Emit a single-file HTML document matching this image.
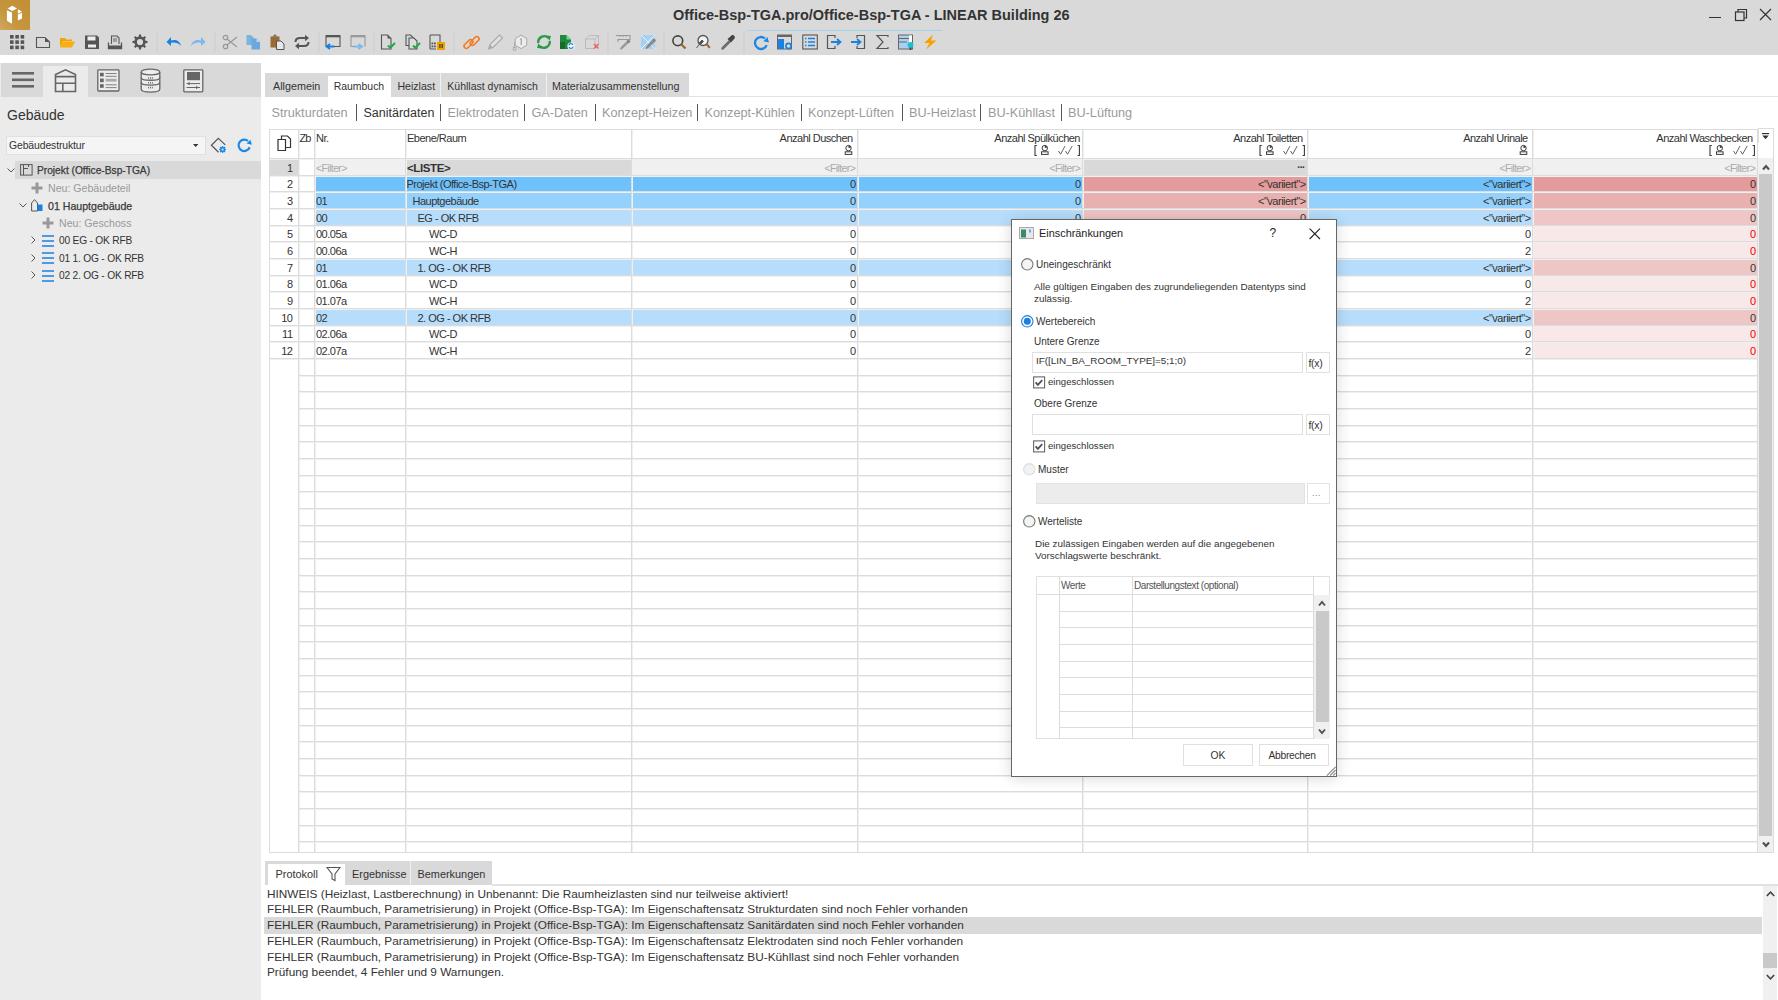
<!DOCTYPE html><html><head><meta charset="utf-8"><title>LINEAR Building</title><style>
*{margin:0;padding:0;box-sizing:border-box}
html,body{width:1778px;height:1000px;overflow:hidden;background:#fff;font-family:"Liberation Sans",sans-serif;color:#333}
div{position:absolute}
.t{white-space:nowrap;line-height:1}
svg{position:absolute;overflow:visible}
</style></head><body>
<div style="left:0px;top:0px;width:1778px;height:55px;background:#d9d9d9"></div>
<div style="left:0px;top:0px;width:29.5px;height:29.5px;background:linear-gradient(45deg,#d0a862 0%,#c5963e 35%,#c18f34 100%)"></div>
<svg style="left:0px;top:0px" width="30" height="30" viewBox="0 0 30 30"><path d="M7.7 8.5 L12.3 5.8 L17 8.6 L12.3 11 Z" fill="#fff"/><path d="M6.9 10.2 L12 12.6 V23.7 L6.9 20.8 Z" fill="#fff"/><path d="M17.9 9.3 L22 11.5 L17.9 13.8 Z" fill="#fff"/><path d="M17.9 14.6 L22 12.8 V18.6 L17.9 20.6 Z" fill="#fff"/></svg>
<div class="t" style="left:673px;top:8px;font-size:14.47px;color:#333;font-weight:bold;">Office-Bsp-TGA.pro/Office-Bsp-TGA - LINEAR Building 26</div>
<div style="left:1709px;top:17px;width:12px;height:1.3px;background:#333"></div>
<svg style="left:1734px;top:8px" width="14" height="14" viewBox="0 0 14 14"><rect x="1.5" y="4" width="8.5" height="8.5" fill="none" stroke="#333" stroke-width="1.2"/><path d="M4 4 V1.5 H12.5 V10 H10" fill="none" stroke="#333" stroke-width="1.2"/></svg>
<svg style="left:1759px;top:8px" width="14" height="14" viewBox="0 0 14 14"><path d="M1 1 L12 12 M12 1 L1 12" stroke="#333" stroke-width="1.2"/></svg>
<svg style="left:9px;top:34px" width="16" height="16" viewBox="0 0 16 16"><rect x="1.0" y="1.0" width="3.6" height="3.6" fill="#555"/><rect x="1.0" y="6.3" width="3.6" height="3.6" fill="#555"/><rect x="1.0" y="11.6" width="3.6" height="3.6" fill="#555"/><rect x="6.3" y="1.0" width="3.6" height="3.6" fill="#555"/><rect x="6.3" y="6.3" width="3.6" height="3.6" fill="#555"/><rect x="6.3" y="11.6" width="3.6" height="3.6" fill="#555"/><rect x="11.6" y="1.0" width="3.6" height="3.6" fill="#555"/><rect x="11.6" y="6.3" width="3.6" height="3.6" fill="#555"/><rect x="11.6" y="11.6" width="3.6" height="3.6" fill="#555"/></svg>
<svg style="left:35px;top:34px" width="16" height="16" viewBox="0 0 16 16"><path d="M1.5 3.5 H10 L14.5 8 V13.5 H1.5 Z" fill="none" stroke="#555" stroke-width="1.1"/><path d="M10 3.5 L14.5 8 H10 Z" fill="#555"/></svg>
<svg style="left:59px;top:34px" width="16" height="16" viewBox="0 0 16 16"><path d="M1 4 H6 L7.5 5.5 H13 V7 H4 L1 13 Z" fill="#f5a300"/><path d="M4 7.5 H16 L13 13.5 H1 Z" fill="#f9ae12"/></svg>
<svg style="left:84px;top:34px" width="16" height="16" viewBox="0 0 16 16"><path d="M1 1.5 H13 L15 3.5 V15 H1 Z" fill="#555"/><rect x="3.5" y="2.5" width="8" height="4" fill="#eee"/><rect x="4" y="10.5" width="8" height="3" fill="#eee"/></svg>
<svg style="left:107px;top:34px" width="16" height="16" viewBox="0 0 16 16"><path d="M1.5 8.5 V14.5 H14.5 V8.5" fill="none" stroke="#555" stroke-width="1.3"/><path d="M4.5 10 V2 H10 L12 4 V10" fill="none" stroke="#555" stroke-width="1.1"/><path d="M6 5 H10 M6 7 H10" stroke="#555" stroke-width="0.9"/><rect x="1.5" y="11.5" width="13" height="3" fill="#555"/></svg>
<svg style="left:132px;top:34px" width="16" height="16" viewBox="0 0 16 16"><circle cx="8" cy="8" r="4.4" fill="none" stroke="#555" stroke-width="2.6"/><rect x="6.9" y="0.5" width="2.2" height="3.2" fill="#555" transform="rotate(0 8 8)"/><rect x="6.9" y="0.5" width="2.2" height="3.2" fill="#555" transform="rotate(45 8 8)"/><rect x="6.9" y="0.5" width="2.2" height="3.2" fill="#555" transform="rotate(90 8 8)"/><rect x="6.9" y="0.5" width="2.2" height="3.2" fill="#555" transform="rotate(135 8 8)"/><rect x="6.9" y="0.5" width="2.2" height="3.2" fill="#555" transform="rotate(180 8 8)"/><rect x="6.9" y="0.5" width="2.2" height="3.2" fill="#555" transform="rotate(225 8 8)"/><rect x="6.9" y="0.5" width="2.2" height="3.2" fill="#555" transform="rotate(270 8 8)"/><rect x="6.9" y="0.5" width="2.2" height="3.2" fill="#555" transform="rotate(315 8 8)"/></svg>
<svg style="left:166px;top:34px" width="16" height="16" viewBox="0 0 16 16"><path d="M15 12 C14 6.5 9 5 5 6.5 L5 3 L0.5 8 L5 12 L5 9 C8 8 12 8.5 15 12 Z" fill="#1c80e0"/></svg>
<svg style="left:190px;top:34px" width="16" height="16" viewBox="0 0 16 16"><path d="M1 12 C2 6.5 7 5 11 6.5 L11 3 L15.5 8 L11 12 L11 9 C8 8 4 8.5 1 12 Z" fill="#7ab8ee"/></svg>
<svg style="left:222px;top:34px" width="16" height="16" viewBox="0 0 16 16"><circle cx="3.5" cy="12.5" r="2.2" fill="none" stroke="#999" stroke-width="1.3"/><circle cx="3.5" cy="3.5" r="2.2" fill="none" stroke="#999" stroke-width="1.3"/><path d="M5 5 L15 13 M5 11 L15 3" stroke="#999" stroke-width="1.3"/></svg>
<svg style="left:246px;top:34px" width="16" height="16" viewBox="0 0 16 16"><path d="M0.5 1 H5 L7.5 3.5 V11 H0.5 Z" fill="#7ab4e0"/><path d="M5.5 4.5 H10.5 L14 8 V15.5 H5.5 Z" fill="#6aa8dc"/><path d="M10.5 4.5 V8 H14" fill="#b8d8f0"/></svg>
<svg style="left:270px;top:34px" width="16" height="16" viewBox="0 0 16 16"><rect x="0.5" y="2.5" width="9" height="11" fill="#9c6a34"/><path d="M2.5 2.5 L5 0.3 L7.5 2.5 Z" fill="#666"/><path d="M6.5 7 H11 L14 10 V15.5 H6.5 Z" fill="#e8e8e8" stroke="#555" stroke-width="1"/></svg>
<svg style="left:294px;top:34px" width="16" height="16" viewBox="0 0 16 16"><path d="M1.5 8 C1.5 5 3.5 4 6 4 H12.5" fill="none" stroke="#555" stroke-width="2"/><path d="M11 0.8 L15 4 L11 7.2 Z" fill="#555"/><path d="M14.5 8 C14.5 11 12.5 12 10 12 H3.5" fill="none" stroke="#555" stroke-width="2"/><path d="M5 8.8 L1 12 L5 15.2 Z" fill="#555"/></svg>
<svg style="left:325px;top:34px" width="16" height="16" viewBox="0 0 16 16"><rect x="0.5" y="1" width="15" height="2.3" fill="#555"/><path d="M1 3 V12 M15 3 V12.5 H9" fill="none" stroke="#555" stroke-width="1.1"/><path d="M9.5 12.5 H3 M5 10 L1.5 12.5 L5 15" fill="none" stroke="#1c80e0" stroke-width="1.9"/></svg>
<svg style="left:350px;top:34px" width="16" height="16" viewBox="0 0 16 16"><rect x="0.5" y="1" width="15" height="2.3" fill="#999"/><path d="M1 3 V12.5 H4 M15 3 V12.5" fill="none" stroke="#999" stroke-width="1.1"/><path d="M3.5 12.5 H10.5 M8.5 10 L12 12.5 L8.5 15" fill="none" stroke="#80b8e8" stroke-width="1.9"/></svg>
<svg style="left:380px;top:34px" width="16" height="16" viewBox="0 0 16 16"><path d="M1.5 1 H7.5 L11 4.5 V15 H1.5 Z" fill="none" stroke="#555" stroke-width="1.1"/><path d="M7.5 1 V4.5 H11 Z" fill="#555"/><path d="M8 11.5 L10.3 13.8 L15 9" fill="none" stroke="#22aa44" stroke-width="2"/></svg>
<svg style="left:405px;top:34px" width="16" height="16" viewBox="0 0 16 16"><path d="M1 1 H5.5 L8 3.5 V11.5 H1 Z" fill="none" stroke="#555" stroke-width="1.1"/><path d="M4 4 H9 L12 7 V15 H4 Z" fill="#ddd" stroke="#555" stroke-width="1.1"/><path d="M8 11.5 L10.3 13.8 L15 9" fill="none" stroke="#22aa44" stroke-width="2"/></svg>
<svg style="left:429px;top:34px" width="16" height="16" viewBox="0 0 16 16"><path d="M1 1 H11 V8 M7 15 H1 Z" fill="none" stroke="#555" stroke-width="1.1"/><path d="M1 1 V15" stroke="#555" stroke-width="1.1"/><rect x="2.5" y="8.5" width="1.8" height="1.8" fill="#555"/><rect x="5" y="8.5" width="1.8" height="1.8" fill="#555"/><rect x="2.5" y="11.5" width="1.8" height="1.8" fill="#555"/><rect x="5" y="11.5" width="1.8" height="1.8" fill="#555"/><rect x="8" y="8" width="8" height="8" fill="#f0a400"/><rect x="10.3" y="10" width="1.2" height="4" fill="#333"/><rect x="12.6" y="10" width="1.2" height="4" fill="#333"/></svg>
<svg style="left:463px;top:34px" width="16" height="16" viewBox="0 0 16 16"><rect x="0.2" y="7.75" width="10.5" height="4.5" rx="2.25" fill="none" stroke="#f57a1e" stroke-width="1.6" transform="rotate(-45 5.45 10)"/><rect x="6.4" y="4.75" width="10.5" height="4.5" rx="2.25" fill="none" stroke="#f57a1e" stroke-width="1.6" transform="rotate(-45 11.65 7)"/></svg>
<svg style="left:487px;top:34px" width="16" height="16" viewBox="0 0 16 16"><path d="M1.5 15 L3 10.5 L12.5 1 L15.5 4 L6 13.5 Z" fill="#e2e2e2" stroke="#aaa" stroke-width="1.1"/><path d="M1.5 15 L3 10.5 L6 13.5 Z" fill="#aaa"/></svg>
<svg style="left:511px;top:34px" width="16" height="16" viewBox="0 0 16 16"><path d="M10 1.2 L15.8 4.5 V11.2 L10 14.6 L4.2 11.2 V4.5 Z" fill="#ececec" stroke="#aaa" stroke-width="1"/><path d="M10.2 4.5 V11" stroke="#999" stroke-width="1.1"/><path d="M9 5.3 L10.2 4.5" stroke="#999" stroke-width="0.9"/><path d="M3.6 8 V13.5" stroke="#aaa" stroke-width="1"/><rect x="2.3" y="13.5" width="2.6" height="2.6" fill="none" stroke="#aaa" stroke-width="0.9"/></svg>
<svg style="left:536px;top:34px" width="16" height="16" viewBox="0 0 16 16"><path d="M2.3 9 A6 6 0 0 1 12.3 3.8" fill="none" stroke="#2a9a4a" stroke-width="2.4"/><path d="M13.7 7 A6 6 0 0 1 3.7 12.2" fill="none" stroke="#2a9a4a" stroke-width="2.4"/><path d="M10 1.5 L15 2 L13.5 6.8 Z M6 14.5 L1 14 L2.5 9.2 Z" fill="#2a9a4a"/></svg>
<svg style="left:559px;top:34px" width="16" height="16" viewBox="0 0 16 16"><path d="M1 1 H7.5 L12 5.5 V15 H1 Z" fill="#1f8a3c"/><path d="M7.5 1 L12 5.5 H7.5 Z" fill="#7fd090"/><rect x="1" y="8" width="5" height="7" fill="#156a2c"/><circle cx="12" cy="12" r="3.6" fill="#fff"/><path d="M9.8 11.5 A2.2 2.2 0 0 1 14 11 M14.2 12.5 A2.2 2.2 0 0 1 10 13" fill="none" stroke="#1c80e0" stroke-width="1.3"/></svg>
<svg style="left:584px;top:34px" width="16" height="16" viewBox="0 0 16 16"><path d="M1.5 5 L5 1.5 H14.5 V11 L11 14.5 H1.5 Z M1.5 5 H11 V14.5 M11 5 L14.5 1.5" fill="none" stroke="#bbb" stroke-width="1"/><path d="M10 10 L14.5 14.5 M14.5 10 L10 14.5" stroke="#f06060" stroke-width="1.5"/></svg>
<svg style="left:615px;top:34px" width="16" height="16" viewBox="0 0 16 16"><path d="M1 1.5 H15 V5.5 H3 V8" fill="none" stroke="#999" stroke-width="1.1"/><path d="M5 1.5 V3 M8 1.5 V3 M11 1.5 V3" stroke="#999" stroke-width="1"/><path d="M13 7 L7 13 L5.5 15 L7.5 14 L13.5 8" fill="none" stroke="#999" stroke-width="1.4"/><circle cx="13.5" cy="7.5" r="1.8" fill="#888"/></svg>
<svg style="left:640px;top:34px" width="16" height="16" viewBox="0 0 16 16"><rect x="1" y="1" width="14" height="14" fill="#a8d0f0"/><path d="M1 1 L15 15 M15 1 L1 15" stroke="#e8f2fa" stroke-width="1"/><path d="M13.5 6 L7.5 12 L6 14.5 L8.5 13 L14.5 7" fill="none" stroke="#888" stroke-width="1.3"/><circle cx="14" cy="6.5" r="1.8" fill="#888"/></svg>
<svg style="left:671px;top:34px" width="16" height="16" viewBox="0 0 16 16"><circle cx="6.8" cy="6.8" r="4.9" fill="none" stroke="#444" stroke-width="1.6"/><path d="M10.3 10.3 L14.5 14.5" stroke="#a0642a" stroke-width="2.2"/></svg>
<svg style="left:695px;top:34px" width="16" height="16" viewBox="0 0 16 16"><circle cx="8" cy="6.5" r="5" fill="#f4f4f4" stroke="#555" stroke-width="1.3"/><path d="M11.5 10 L14.8 13.8" stroke="#a0642a" stroke-width="2"/><path d="M7 6 L4 9 L5.5 10.5 L8.5 7.5 Z M4.5 10 L1.5 14" fill="#555" stroke="#555" stroke-width="1"/></svg>
<svg style="left:720px;top:34px" width="16" height="16" viewBox="0 0 16 16"><path d="M9.5 6.5 L2.5 13.5 C1.5 14.5 2 15.5 3 15 L10 8" fill="none" stroke="#666" stroke-width="1.3"/><path d="M7.5 5 L11.5 1.5 C13 0 16 3 14.5 4.5 L11 8.5 Z" fill="#444"/></svg>
<svg style="left:754px;top:34px" width="16" height="16" viewBox="0 0 16 16"><path d="M12.64 11.05 A6 6 0 1 1 10.86 4.4" fill="none" stroke="#1c88e6" stroke-width="2.3"/><path d="M9.4 7.2 L15 8.6 L13.4 3.1 Z" fill="#1c88e6"/></svg>
<svg style="left:777px;top:34px" width="16" height="16" viewBox="0 0 16 16"><rect x="0.5" y="1" width="14" height="14" fill="none" stroke="#666" stroke-width="1"/><rect x="0.5" y="1" width="14" height="2" fill="#666"/><rect x="1" y="5" width="6" height="10" fill="#1c80e0"/><circle cx="11.5" cy="12" r="2.6" fill="none" stroke="#1c80e0" stroke-width="1.6"/></svg>
<svg style="left:802px;top:34px" width="16" height="16" viewBox="0 0 16 16"><rect x="0.8" y="1" width="14.5" height="14" fill="none" stroke="#555" stroke-width="1.1"/><path d="M3 4.5 H4.5 M6 4.5 H13 M3 8 H4.5 M6 8 H13 M3 11.5 H4.5 M6 11.5 H13" stroke="#1c80e0" stroke-width="1.3"/></svg>
<svg style="left:826px;top:34px" width="16" height="16" viewBox="0 0 16 16"><path d="M9 4 V1.5 H1.5 V14.5 H9 V12" fill="none" stroke="#555" stroke-width="1.2"/><path d="M5 8 H14 M11 5 L14.5 8 L11 11" fill="none" stroke="#1c80e0" stroke-width="1.8"/></svg>
<svg style="left:850px;top:34px" width="16" height="16" viewBox="0 0 16 16"><path d="M7 4 V1.5 H14.5 V14.5 H7 V12" fill="none" stroke="#555" stroke-width="1.2"/><path d="M1 8 H10 M7 5 L10.5 8 L7 11" fill="none" stroke="#1c80e0" stroke-width="1.8"/></svg>
<svg style="left:875px;top:34px" width="16" height="16" viewBox="0 0 16 16"><path d="M13 3 V1.5 H2 L8 8 L2 14.5 H13 V13" fill="none" stroke="#555" stroke-width="1.2"/></svg>
<svg style="left:898px;top:34px" width="16" height="16" viewBox="0 0 16 16"><rect x="0.5" y="1" width="14" height="14" fill="#a8d0f0" stroke="#666" stroke-width="1"/><path d="M0.5 4.5 H14.5 M0.5 8 H9" stroke="#666" stroke-width="1"/><rect x="11" y="1.5" width="3" height="7" fill="#fff"/><circle cx="12.5" cy="11" r="3" fill="#20c0d0"/><rect x="11.6" y="13.5" width="1.8" height="2.5" fill="#444"/></svg>
<svg style="left:922px;top:34px" width="16" height="16" viewBox="0 0 16 16"><path d="M11 0.5 L2 9 H7.5 L4 15.5 L14.5 6.5 H9 Z" fill="#f5a300"/></svg>
<div style="left:156px;top:31px;width:1.5px;height:22px;background:#d3d3d3"></div>
<div style="left:214px;top:31px;width:1.5px;height:22px;background:#d3d3d3"></div>
<div style="left:318px;top:31px;width:1.5px;height:22px;background:#d3d3d3"></div>
<div style="left:373px;top:31px;width:1.5px;height:22px;background:#d3d3d3"></div>
<div style="left:453px;top:31px;width:1.5px;height:22px;background:#d3d3d3"></div>
<div style="left:607px;top:31px;width:1.5px;height:22px;background:#d3d3d3"></div>
<div style="left:663px;top:31px;width:1.5px;height:22px;background:#d3d3d3"></div>
<div style="left:743px;top:31px;width:1.5px;height:22px;background:#d3d3d3"></div>
<div style="left:748px;top:30px;width:194px;height:1px;background:#9fd3ec"></div>
<div style="left:0px;top:63px;width:261px;height:937px;background:#ebebeb"></div>
<div style="left:1px;top:63px;width:260px;height:34px;background:#d9d9d9"></div>
<div style="left:43px;top:66px;width:45px;height:31px;background:#ebebeb"></div>
<svg style="left:12px;top:72px" width="23" height="15" viewBox="0 0 23 15"><rect x="0" y="0" width="22" height="2.6" fill="#666"/><rect x="0" y="6.5" width="22" height="2.6" fill="#666"/><rect x="0" y="13" width="22" height="2.6" fill="#666"/></svg>
<svg style="left:54px;top:69px" width="24" height="24" viewBox="0 0 24 24"><path d="M1.5 22.5 V5.5 L11.5 0.8 L21.5 5.5 V22.5 Z" fill="none" stroke="#666" stroke-width="1.6"/><path d="M1.5 7.6 H21.5 M1.5 14.3 H21.5 M8.8 14.3 V22.5" stroke="#666" stroke-width="1.6"/></svg>
<svg style="left:97px;top:69px" width="23" height="23" viewBox="0 0 23 23"><rect x="0.8" y="0.8" width="21.2" height="21.2" rx="0.8" fill="#ececec" stroke="#666" stroke-width="1.3"/><rect x="3" y="3.8" width="3.7" height="3.6" fill="#666"/><rect x="3" y="9.6" width="3.7" height="3.6" fill="#666"/><rect x="3" y="15.2" width="3.7" height="3.6" fill="#666"/><path d="M8.6 4.5 H19.6 M8.6 7.3 H19.6 M8.6 15.8 H19.6 M8.6 18.6 H19.6" stroke="#666" stroke-width="0.8"/><rect x="8.6" y="9.8" width="11" height="2.8" fill="#aaa"/></svg>
<svg style="left:139px;top:68px" width="24" height="26" viewBox="0 0 24 26"><path d="M2.2 4 V21 C2.2 25.2 20.8 25.2 20.8 21 V4" fill="#ececec" stroke="#666" stroke-width="1.3"/><ellipse cx="11.5" cy="4" rx="9.3" ry="2.9" fill="#ececec" stroke="#666" stroke-width="1.3"/><path d="M2.2 9.4 C2.2 13.2 20.8 13.2 20.8 9.4 M2.2 14.3 C2.2 18.1 20.8 18.1 20.8 14.3" fill="none" stroke="#666" stroke-width="1.3"/><path d="M9.6 9.2 v1.6 M11.5 9.2 v1.6 M13.4 9.2 v1.6 M9.6 14 v1.6 M11.5 14 v1.6 M13.4 14 v1.6 M9.6 18.8 v1.6 M11.5 18.8 v1.6 M13.4 18.8 v1.6" stroke="#666" stroke-width="0.9"/></svg>
<svg style="left:183px;top:69px" width="21" height="24" viewBox="0 0 21 24"><rect x="0.8" y="0.8" width="19" height="22" rx="0.8" fill="#ececec" stroke="#666" stroke-width="1.3"/><rect x="4" y="3" width="13" height="8.2" fill="#666"/><path d="M3.5 14.6 H17 M3.5 18.5 H17" stroke="#666" stroke-width="1"/><rect x="5.4" y="13.2" width="1.3" height="2.8" fill="#666"/><path d="M13 16.8 L15.5 18.5 L13 20.2 Z" fill="#666"/></svg>
<div class="t" style="left:7px;top:107.5px;font-size:14px;color:#333;font-weight:normal;">Gebäude</div>
<div style="left:6px;top:136px;width:199.5px;height:19px;background:#f5f5f5;border:1px solid #e0e0e0"></div>
<div class="t" style="left:9px;top:141px;font-size:10.4px;color:#333;font-weight:normal;letter-spacing:-0.1px">Gebäudestruktur</div>
<svg style="left:193px;top:144px" width="6" height="3" viewBox="0 0 6 3"><path d="M0 0 H5.4 L2.7 2.9 Z" fill="#333"/></svg>
<svg style="left:205px;top:135px" width="50" height="20" viewBox="0 0 50 20"><path d="M13.5 17.3 L6.4 10.3 L13.3 3.3 L20.3 9.9" fill="none" stroke="#555" stroke-width="1.2"/><circle cx="17.6" cy="14.5" r="2.5" fill="#1c88e6"/><rect x="16.900000000000002" y="11.1" width="1.4" height="6.8" fill="#1c88e6" transform="rotate(0 17.6 14.5)"/><rect x="16.900000000000002" y="11.1" width="1.4" height="6.8" fill="#1c88e6" transform="rotate(45 17.6 14.5)"/><rect x="16.900000000000002" y="11.1" width="1.4" height="6.8" fill="#1c88e6" transform="rotate(90 17.6 14.5)"/><rect x="16.900000000000002" y="11.1" width="1.4" height="6.8" fill="#1c88e6" transform="rotate(135 17.6 14.5)"/><circle cx="17.6" cy="14.5" r="1" fill="#ebebeb"/><path d="M44.66 12.25 A5.7 5.7 0 1 1 42.96 5.93" fill="none" stroke="#1c88e6" stroke-width="2.2"/><path d="M41.6 8.4 L46.9 9.7 L45.4 4.8 Z" fill="#1c88e6"/></svg>
<div style="left:15px;top:161px;width:246px;height:18px;background:#d9d9d9"></div>
<svg style="left:7px;top:168px" width="8" height="5" viewBox="0 0 8 5"><path d="M0.5 0.5 L4 4 L7.5 0.5" fill="none" stroke="#555" stroke-width="1"/></svg>
<svg style="left:20px;top:164px" width="13" height="12" viewBox="0 0 13 12"><rect x="0.6" y="0.6" width="11.5" height="10.5" fill="none" stroke="#555" stroke-width="1"/><path d="M3.5 0.6 V11 M3.5 4.5 H8 M8.5 0.6 V3" stroke="#555" stroke-width="1"/></svg>
<div class="t" style="left:37px;top:166px;font-size:10.2px;color:#3a3a3a;font-weight:normal;-webkit-text-stroke:0.25px #3a3a3a">Projekt (Office-Bsp-TGA)</div>
<svg style="left:31px;top:182px" width="12" height="12" viewBox="0 0 12 12"><path d="M6 0.5 V11.5 M0.5 6 H11.5" stroke="#999" stroke-width="3"/></svg>
<div class="t" style="left:48px;top:183px;font-size:10.6px;color:#999;font-weight:normal;">Neu: Gebäudeteil</div>
<svg style="left:19px;top:203px" width="8" height="5" viewBox="0 0 8 5"><path d="M0.5 0.5 L4 4 L7.5 0.5" fill="none" stroke="#555" stroke-width="1"/></svg>
<svg style="left:31px;top:199px" width="12" height="13" viewBox="0 0 12 13"><path d="M0.6 12 V4 L3.5 0.6 L6.5 4 V12 Z" fill="none" stroke="#555" stroke-width="1"/><rect x="6.5" y="5.5" width="5" height="6.5" fill="#1c80e0"/></svg>
<div class="t" style="left:48px;top:201px;font-size:10.6px;color:#3a3a3a;font-weight:normal;-webkit-text-stroke:0.25px #3a3a3a">01 Hauptgebäude</div>
<svg style="left:42px;top:217px" width="12" height="12" viewBox="0 0 12 12"><path d="M6 0.5 V11.5 M0.5 6 H11.5" stroke="#999" stroke-width="3"/></svg>
<div class="t" style="left:59px;top:218px;font-size:10.6px;color:#999;font-weight:normal;">Neu: Geschoss</div>
<svg style="left:31px;top:236.0px" width="5" height="8" viewBox="0 0 5 8"><path d="M0.5 0.5 L4 4 L0.5 7.5" fill="none" stroke="#555" stroke-width="1"/></svg>
<svg style="left:42px;top:234.5px" width="12" height="12" viewBox="0 0 12 12"><path d="M0 1 H12 M0 6 H12 M0 11 H12" stroke="#1c80e0" stroke-width="1.6"/></svg>
<div class="t" style="left:59px;top:236.0px;font-size:10.2px;color:#333;font-weight:normal;letter-spacing:-0.2px">00 EG - OK RFB</div>
<svg style="left:31px;top:253.6px" width="5" height="8" viewBox="0 0 5 8"><path d="M0.5 0.5 L4 4 L0.5 7.5" fill="none" stroke="#555" stroke-width="1"/></svg>
<svg style="left:42px;top:252.1px" width="12" height="12" viewBox="0 0 12 12"><path d="M0 1 H12 M0 6 H12 M0 11 H12" stroke="#1c80e0" stroke-width="1.6"/></svg>
<div class="t" style="left:59px;top:253.6px;font-size:10.2px;color:#333;font-weight:normal;letter-spacing:-0.2px">01 1. OG - OK RFB</div>
<svg style="left:31px;top:271.2px" width="5" height="8" viewBox="0 0 5 8"><path d="M0.5 0.5 L4 4 L0.5 7.5" fill="none" stroke="#555" stroke-width="1"/></svg>
<svg style="left:42px;top:269.7px" width="12" height="12" viewBox="0 0 12 12"><path d="M0 1 H12 M0 6 H12 M0 11 H12" stroke="#1c80e0" stroke-width="1.6"/></svg>
<div class="t" style="left:59px;top:271.2px;font-size:10.2px;color:#333;font-weight:normal;letter-spacing:-0.2px">02 2. OG - OK RFB</div>
<div style="left:265px;top:73px;width:424px;height:23.5px;background:#d9d9d9"></div>
<div style="left:689px;top:96px;width:1089px;height:1px;background:#e3e3e3"></div>
<div style="left:328px;top:76px;width:63px;height:21px;background:#fff"></div>
<div style="left:440px;top:73px;width:1.3px;height:23.5px;background:#f2f2f2"></div>
<div style="left:546px;top:73px;width:1.3px;height:23.5px;background:#f2f2f2"></div>
<div class="t" style="left:273px;top:81.203px;font-size:10.77px;color:#333;font-weight:normal;">Allgemein</div>
<div class="t" style="left:333.7px;top:81.5px;font-size:10.44px;color:#333;font-weight:normal;">Raumbuch</div>
<div class="t" style="left:397.4px;top:81.356px;font-size:10.6px;color:#333;font-weight:normal;">Heizlast</div>
<div class="t" style="left:447.3px;top:81.437px;font-size:10.51px;color:#333;font-weight:normal;">Kühllast dynamisch</div>
<div class="t" style="left:552px;top:81.239px;font-size:10.73px;color:#333;font-weight:normal;">Materialzusammenstellung</div>
<div class="t" style="left:271.5px;top:106.5px;font-size:12.7px;color:#9a9a9a;font-weight:normal;">Strukturdaten</div>
<div class="t" style="left:363.5px;top:106.67999999999999px;font-size:12.5px;color:#333;font-weight:normal;">Sanitärdaten</div>
<div class="t" style="left:447.5px;top:106.5px;font-size:12.7px;color:#9a9a9a;font-weight:normal;">Elektrodaten</div>
<div class="t" style="left:531.5px;top:106.5px;font-size:12.7px;color:#9a9a9a;font-weight:normal;">GA-Daten</div>
<div class="t" style="left:602px;top:106.5px;font-size:12.7px;color:#9a9a9a;font-weight:normal;">Konzept-Heizen</div>
<div class="t" style="left:704.5px;top:106.5px;font-size:12.7px;color:#9a9a9a;font-weight:normal;">Konzept-Kühlen</div>
<div class="t" style="left:808px;top:106.5px;font-size:12.7px;color:#9a9a9a;font-weight:normal;">Konzept-Lüften</div>
<div class="t" style="left:909px;top:106.5px;font-size:12.7px;color:#9a9a9a;font-weight:normal;">BU-Heizlast</div>
<div class="t" style="left:988px;top:106.5px;font-size:12.7px;color:#9a9a9a;font-weight:normal;">BU-Kühllast</div>
<div class="t" style="left:1068px;top:106.5px;font-size:12.7px;color:#9a9a9a;font-weight:normal;">BU-Lüftung</div>
<div style="left:356px;top:104px;width:1.4px;height:17px;background:#555"></div>
<div style="left:440px;top:104px;width:1.4px;height:17px;background:#555"></div>
<div style="left:524px;top:104px;width:1.4px;height:17px;background:#555"></div>
<div style="left:595px;top:104px;width:1.4px;height:17px;background:#555"></div>
<div style="left:697px;top:104px;width:1.4px;height:17px;background:#555"></div>
<div style="left:801px;top:104px;width:1.4px;height:17px;background:#555"></div>
<div style="left:902px;top:104px;width:1.4px;height:17px;background:#555"></div>
<div style="left:980px;top:104px;width:1.4px;height:17px;background:#555"></div>
<div style="left:1061px;top:104px;width:1.4px;height:17px;background:#555"></div>
<div style="left:269px;top:128.5px;width:1504px;height:724.5px;border:1.3px solid #e0e0e0;background:#fff"></div>
<div style="left:269px;top:158.5px;width:29px;height:16.67px;background:#d9d9d9"></div>
<div style="left:314.4px;top:158.5px;width:90.80000000000001px;height:16.67px;background:#f0f0f0"></div>
<div style="left:405.2px;top:158.5px;width:225.90000000000003px;height:16.67px;background:#d9d9d9"></div>
<div style="left:631.1px;top:158.5px;width:451.1px;height:16.67px;background:#f0f0f0"></div>
<div style="left:1082.2px;top:158.5px;width:225.0px;height:16.67px;background:#d9d9d9"></div>
<div style="left:1307.2px;top:158.5px;width:450.0px;height:16.67px;background:#f0f0f0"></div>
<div style="left:314.4px;top:175.17000000000002px;width:767.8000000000001px;height:16.67px;background:#6fc1fc"></div>
<div style="left:1307.2px;top:175.17000000000002px;width:225.0px;height:16.67px;background:#6fc1fc"></div>
<div style="left:1082.2px;top:175.17000000000002px;width:225.0px;height:16.67px;background:#e39b9b"></div>
<div style="left:1532.2px;top:175.17000000000002px;width:225.0px;height:16.67px;background:#e39b9b"></div>
<div style="left:314.4px;top:191.84px;width:767.8000000000001px;height:16.67px;background:#94d1fd"></div>
<div style="left:1307.2px;top:191.84px;width:225.0px;height:16.67px;background:#94d1fd"></div>
<div style="left:1082.2px;top:191.84px;width:225.0px;height:16.67px;background:#e9b0b0"></div>
<div style="left:1532.2px;top:191.84px;width:225.0px;height:16.67px;background:#e9b0b0"></div>
<div style="left:314.4px;top:208.51px;width:767.8000000000001px;height:16.67px;background:#b6defc"></div>
<div style="left:1307.2px;top:208.51px;width:225.0px;height:16.67px;background:#b6defc"></div>
<div style="left:1082.2px;top:208.51px;width:225.0px;height:16.67px;background:#efc6c6"></div>
<div style="left:1532.2px;top:208.51px;width:225.0px;height:16.67px;background:#efc6c6"></div>
<div style="left:1082.2px;top:225.18px;width:225.0px;height:16.67px;background:#f9e8e8"></div>
<div style="left:1532.2px;top:225.18px;width:225.0px;height:16.67px;background:#f9e8e8"></div>
<div style="left:1082.2px;top:241.85000000000002px;width:225.0px;height:16.67px;background:#f9e8e8"></div>
<div style="left:1532.2px;top:241.85000000000002px;width:225.0px;height:16.67px;background:#f9e8e8"></div>
<div style="left:314.4px;top:258.52px;width:767.8000000000001px;height:16.67px;background:#b6defc"></div>
<div style="left:1307.2px;top:258.52px;width:225.0px;height:16.67px;background:#b6defc"></div>
<div style="left:1082.2px;top:258.52px;width:225.0px;height:16.67px;background:#efc6c6"></div>
<div style="left:1532.2px;top:258.52px;width:225.0px;height:16.67px;background:#efc6c6"></div>
<div style="left:1082.2px;top:275.19px;width:225.0px;height:16.67px;background:#f9e8e8"></div>
<div style="left:1532.2px;top:275.19px;width:225.0px;height:16.67px;background:#f9e8e8"></div>
<div style="left:1082.2px;top:291.86px;width:225.0px;height:16.67px;background:#f9e8e8"></div>
<div style="left:1532.2px;top:291.86px;width:225.0px;height:16.67px;background:#f9e8e8"></div>
<div style="left:314.4px;top:308.53000000000003px;width:767.8000000000001px;height:16.67px;background:#b6defc"></div>
<div style="left:1307.2px;top:308.53000000000003px;width:225.0px;height:16.67px;background:#b6defc"></div>
<div style="left:1082.2px;top:308.53000000000003px;width:225.0px;height:16.67px;background:#efc6c6"></div>
<div style="left:1532.2px;top:308.53000000000003px;width:225.0px;height:16.67px;background:#efc6c6"></div>
<div style="left:1082.2px;top:325.20000000000005px;width:225.0px;height:16.67px;background:#f9e8e8"></div>
<div style="left:1532.2px;top:325.20000000000005px;width:225.0px;height:16.67px;background:#f9e8e8"></div>
<div style="left:1082.2px;top:341.87px;width:225.0px;height:16.67px;background:#f9e8e8"></div>
<div style="left:1532.2px;top:341.87px;width:225.0px;height:16.67px;background:#f9e8e8"></div>
<div style="left:269px;top:159px;width:1488.2px;height:1px;background:#f0f0f0"></div>
<div style="left:269px;top:176px;width:1488.2px;height:1px;background:#f0f0f0"></div>
<div style="left:269px;top:192px;width:1488.2px;height:1px;background:#f0f0f0"></div>
<div style="left:269px;top:209px;width:1488.2px;height:1px;background:#f0f0f0"></div>
<div style="left:269px;top:226px;width:1488.2px;height:1px;background:#f0f0f0"></div>
<div style="left:269px;top:242px;width:1488.2px;height:1px;background:#f0f0f0"></div>
<div style="left:269px;top:259px;width:1488.2px;height:1px;background:#f0f0f0"></div>
<div style="left:269px;top:276px;width:1488.2px;height:1px;background:#f0f0f0"></div>
<div style="left:269px;top:292px;width:1488.2px;height:1px;background:#f0f0f0"></div>
<div style="left:269px;top:309px;width:1488.2px;height:1px;background:#f0f0f0"></div>
<div style="left:269px;top:326px;width:1488.2px;height:1px;background:#f0f0f0"></div>
<div style="left:269px;top:342px;width:1488.2px;height:1px;background:#f0f0f0"></div>
<div style="left:269px;top:359px;width:1488.2px;height:1px;background:#f0f0f0"></div>
<div style="left:298px;top:359px;width:1459.2px;height:1px;background:#f0f0f0"></div>
<div style="left:298px;top:376px;width:1459.2px;height:1px;background:#f0f0f0"></div>
<div style="left:298px;top:392px;width:1459.2px;height:1px;background:#f0f0f0"></div>
<div style="left:298px;top:409px;width:1459.2px;height:1px;background:#f0f0f0"></div>
<div style="left:298px;top:426px;width:1459.2px;height:1px;background:#f0f0f0"></div>
<div style="left:298px;top:442px;width:1459.2px;height:1px;background:#f0f0f0"></div>
<div style="left:298px;top:459px;width:1459.2px;height:1px;background:#f0f0f0"></div>
<div style="left:298px;top:476px;width:1459.2px;height:1px;background:#f0f0f0"></div>
<div style="left:298px;top:492px;width:1459.2px;height:1px;background:#f0f0f0"></div>
<div style="left:298px;top:509px;width:1459.2px;height:1px;background:#f0f0f0"></div>
<div style="left:298px;top:526px;width:1459.2px;height:1px;background:#f0f0f0"></div>
<div style="left:298px;top:542px;width:1459.2px;height:1px;background:#f0f0f0"></div>
<div style="left:298px;top:559px;width:1459.2px;height:1px;background:#f0f0f0"></div>
<div style="left:298px;top:576px;width:1459.2px;height:1px;background:#f0f0f0"></div>
<div style="left:298px;top:592px;width:1459.2px;height:1px;background:#f0f0f0"></div>
<div style="left:298px;top:609px;width:1459.2px;height:1px;background:#f0f0f0"></div>
<div style="left:298px;top:626px;width:1459.2px;height:1px;background:#f0f0f0"></div>
<div style="left:298px;top:642px;width:1459.2px;height:1px;background:#f0f0f0"></div>
<div style="left:298px;top:659px;width:1459.2px;height:1px;background:#f0f0f0"></div>
<div style="left:298px;top:676px;width:1459.2px;height:1px;background:#f0f0f0"></div>
<div style="left:298px;top:692px;width:1459.2px;height:1px;background:#f0f0f0"></div>
<div style="left:298px;top:709px;width:1459.2px;height:1px;background:#f0f0f0"></div>
<div style="left:298px;top:726px;width:1459.2px;height:1px;background:#f0f0f0"></div>
<div style="left:298px;top:742px;width:1459.2px;height:1px;background:#f0f0f0"></div>
<div style="left:298px;top:759px;width:1459.2px;height:1px;background:#f0f0f0"></div>
<div style="left:298px;top:776px;width:1459.2px;height:1px;background:#f0f0f0"></div>
<div style="left:298px;top:792px;width:1459.2px;height:1px;background:#f0f0f0"></div>
<div style="left:298px;top:809px;width:1459.2px;height:1px;background:#f0f0f0"></div>
<div style="left:298px;top:826px;width:1459.2px;height:1px;background:#f0f0f0"></div>
<div style="left:298px;top:842px;width:1459.2px;height:1px;background:#f0f0f0"></div>
<div style="left:299px;top:128.5px;width:1px;height:724.5px;background:#f0f0f0"></div>
<div style="left:315px;top:128.5px;width:1px;height:724.5px;background:#f0f0f0"></div>
<div style="left:406px;top:128.5px;width:1px;height:724.5px;background:#f0f0f0"></div>
<div style="left:632px;top:128.5px;width:1px;height:724.5px;background:#f0f0f0"></div>
<div style="left:858px;top:128.5px;width:1px;height:724.5px;background:#f0f0f0"></div>
<div style="left:1083px;top:128.5px;width:1px;height:724.5px;background:#f0f0f0"></div>
<div style="left:1308px;top:128.5px;width:1px;height:724.5px;background:#f0f0f0"></div>
<div style="left:1533px;top:128.5px;width:1px;height:724.5px;background:#f0f0f0"></div>
<div style="left:1758px;top:128.5px;width:1px;height:724.5px;background:#f0f0f0"></div>
<div style="left:269px;top:158px;width:1488.2px;height:1px;background:#dcdcdc"></div>
<div style="left:269px;top:175px;width:1488.2px;height:1px;background:#dcdcdc"></div>
<div style="left:269px;top:191px;width:1488.2px;height:1px;background:#dcdcdc"></div>
<div style="left:269px;top:208px;width:1488.2px;height:1px;background:#dcdcdc"></div>
<div style="left:269px;top:225px;width:1488.2px;height:1px;background:#dcdcdc"></div>
<div style="left:269px;top:241px;width:1488.2px;height:1px;background:#dcdcdc"></div>
<div style="left:269px;top:258px;width:1488.2px;height:1px;background:#dcdcdc"></div>
<div style="left:269px;top:275px;width:1488.2px;height:1px;background:#dcdcdc"></div>
<div style="left:269px;top:291px;width:1488.2px;height:1px;background:#dcdcdc"></div>
<div style="left:269px;top:308px;width:1488.2px;height:1px;background:#dcdcdc"></div>
<div style="left:269px;top:325px;width:1488.2px;height:1px;background:#dcdcdc"></div>
<div style="left:269px;top:341px;width:1488.2px;height:1px;background:#dcdcdc"></div>
<div style="left:269px;top:358px;width:1488.2px;height:1px;background:#dcdcdc"></div>
<div style="left:298px;top:358px;width:1459.2px;height:1px;background:#dcdcdc"></div>
<div style="left:298px;top:375px;width:1459.2px;height:1px;background:#dcdcdc"></div>
<div style="left:298px;top:391px;width:1459.2px;height:1px;background:#dcdcdc"></div>
<div style="left:298px;top:408px;width:1459.2px;height:1px;background:#dcdcdc"></div>
<div style="left:298px;top:425px;width:1459.2px;height:1px;background:#dcdcdc"></div>
<div style="left:298px;top:441px;width:1459.2px;height:1px;background:#dcdcdc"></div>
<div style="left:298px;top:458px;width:1459.2px;height:1px;background:#dcdcdc"></div>
<div style="left:298px;top:475px;width:1459.2px;height:1px;background:#dcdcdc"></div>
<div style="left:298px;top:491px;width:1459.2px;height:1px;background:#dcdcdc"></div>
<div style="left:298px;top:508px;width:1459.2px;height:1px;background:#dcdcdc"></div>
<div style="left:298px;top:525px;width:1459.2px;height:1px;background:#dcdcdc"></div>
<div style="left:298px;top:541px;width:1459.2px;height:1px;background:#dcdcdc"></div>
<div style="left:298px;top:558px;width:1459.2px;height:1px;background:#dcdcdc"></div>
<div style="left:298px;top:575px;width:1459.2px;height:1px;background:#dcdcdc"></div>
<div style="left:298px;top:591px;width:1459.2px;height:1px;background:#dcdcdc"></div>
<div style="left:298px;top:608px;width:1459.2px;height:1px;background:#dcdcdc"></div>
<div style="left:298px;top:625px;width:1459.2px;height:1px;background:#dcdcdc"></div>
<div style="left:298px;top:641px;width:1459.2px;height:1px;background:#dcdcdc"></div>
<div style="left:298px;top:658px;width:1459.2px;height:1px;background:#dcdcdc"></div>
<div style="left:298px;top:675px;width:1459.2px;height:1px;background:#dcdcdc"></div>
<div style="left:298px;top:691px;width:1459.2px;height:1px;background:#dcdcdc"></div>
<div style="left:298px;top:708px;width:1459.2px;height:1px;background:#dcdcdc"></div>
<div style="left:298px;top:725px;width:1459.2px;height:1px;background:#dcdcdc"></div>
<div style="left:298px;top:741px;width:1459.2px;height:1px;background:#dcdcdc"></div>
<div style="left:298px;top:758px;width:1459.2px;height:1px;background:#dcdcdc"></div>
<div style="left:298px;top:775px;width:1459.2px;height:1px;background:#dcdcdc"></div>
<div style="left:298px;top:791px;width:1459.2px;height:1px;background:#dcdcdc"></div>
<div style="left:298px;top:808px;width:1459.2px;height:1px;background:#dcdcdc"></div>
<div style="left:298px;top:825px;width:1459.2px;height:1px;background:#dcdcdc"></div>
<div style="left:298px;top:841px;width:1459.2px;height:1px;background:#dcdcdc"></div>
<div style="left:298px;top:128.5px;width:1px;height:724.5px;background:#dcdcdc"></div>
<div style="left:314px;top:128.5px;width:1px;height:724.5px;background:#dcdcdc"></div>
<div style="left:405px;top:128.5px;width:1px;height:724.5px;background:#dcdcdc"></div>
<div style="left:631px;top:128.5px;width:1px;height:724.5px;background:#dcdcdc"></div>
<div style="left:857px;top:128.5px;width:1px;height:724.5px;background:#dcdcdc"></div>
<div style="left:1082px;top:128.5px;width:1px;height:724.5px;background:#dcdcdc"></div>
<div style="left:1307px;top:128.5px;width:1px;height:724.5px;background:#dcdcdc"></div>
<div style="left:1532px;top:128.5px;width:1px;height:724.5px;background:#dcdcdc"></div>
<div style="left:1757px;top:128.5px;width:1px;height:724.5px;background:#dcdcdc"></div>
<div style="left:269px;top:128.5px;width:1504px;height:724.5px;border:1px solid #dcdcdc"></div>
<svg style="left:277px;top:135px" width="15" height="17" viewBox="0 0 15 17"><path d="M4.5 4 V1 H10.5 L13.5 4 V12.5 H8.5" fill="none" stroke="#333" stroke-width="1.2"/><path d="M1 4.5 H8.5 V15.5 H1 Z" fill="none" stroke="#333" stroke-width="1.2"/></svg>
<div class="t" style="left:299.5px;top:133px;font-size:11px;color:#333;font-weight:normal;letter-spacing:-1px">Zb</div>
<div class="t" style="left:316px;top:133px;font-size:11px;color:#333;font-weight:normal;font-size:11px;letter-spacing:-0.5px;">Nr.</div>
<div class="t" style="left:407px;top:133px;font-size:11px;color:#333;font-weight:normal;font-size:11px;letter-spacing:-0.5px;">Ebene/Raum</div>
<div class="t" style="right:925.3px;top:133px;font-size:11px;color:#333;font-weight:normal;font-size:11px;letter-spacing:-0.5px;">Anzahl Duschen</div>
<svg style="left:843.7px;top:145px" width="10" height="10" viewBox="0 0 10 10"><circle cx="4.5" cy="3.1" r="2.7" fill="none" stroke="#3a3a3a" stroke-width="1"/><path d="M4.5 0.4 A2.7 2.7 0 0 1 6.9 2.2 L4.5 3.2 Z" fill="#3a3a3a"/><rect x="1.2" y="6.8" width="6.6" height="2.6" fill="none" stroke="#3a3a3a" stroke-width="1"/></svg>
<div class="t" style="right:698.0px;top:133px;font-size:11px;color:#333;font-weight:normal;font-size:11px;letter-spacing:-0.5px;">Anzahl Spülküchen</div>
<svg style="left:1034.0px;top:145px" width="47" height="11" viewBox="0 0 47 11"><path d="M2.8 0.5 H1 V10.5 H2.8 M43.6 0.5 H45.4 V10.5 H43.6" fill="none" stroke="#3a3a3a" stroke-width="1.1"/><circle cx="10.8" cy="3.1" r="2.7" fill="none" stroke="#3a3a3a" stroke-width="1"/><path d="M10.8 0.4 A2.7 2.7 0 0 1 13.2 2.2 L10.8 3.2 Z" fill="#3a3a3a"/><rect x="7.5" y="6.8" width="6.6" height="2.6" fill="none" stroke="#3a3a3a" stroke-width="1"/><path d="M24.5 6 L26.6 9.2 L31 1 M31.5 6 L33.6 9.2 L38.2 1" fill="none" stroke="#555" stroke-width="0.9"/></svg>
<div class="t" style="right:475.29999999999995px;top:133px;font-size:11px;color:#333;font-weight:normal;font-size:11px;letter-spacing:-0.5px;">Anzahl Toiletten</div>
<svg style="left:1259.0px;top:145px" width="47" height="11" viewBox="0 0 47 11"><path d="M2.8 0.5 H1 V10.5 H2.8 M43.6 0.5 H45.4 V10.5 H43.6" fill="none" stroke="#3a3a3a" stroke-width="1.1"/><circle cx="10.8" cy="3.1" r="2.7" fill="none" stroke="#3a3a3a" stroke-width="1"/><path d="M10.8 0.4 A2.7 2.7 0 0 1 13.2 2.2 L10.8 3.2 Z" fill="#3a3a3a"/><rect x="7.5" y="6.8" width="6.6" height="2.6" fill="none" stroke="#3a3a3a" stroke-width="1"/><path d="M24.5 6 L26.6 9.2 L31 1 M31.5 6 L33.6 9.2 L38.2 1" fill="none" stroke="#555" stroke-width="0.9"/></svg>
<div class="t" style="right:250.29999999999995px;top:133px;font-size:11px;color:#333;font-weight:normal;font-size:11px;letter-spacing:-0.5px;">Anzahl Urinale</div>
<svg style="left:1518.7px;top:145px" width="10" height="10" viewBox="0 0 10 10"><circle cx="4.5" cy="3.1" r="2.7" fill="none" stroke="#3a3a3a" stroke-width="1"/><path d="M4.5 0.4 A2.7 2.7 0 0 1 6.9 2.2 L4.5 3.2 Z" fill="#3a3a3a"/><rect x="1.2" y="6.8" width="6.6" height="2.6" fill="none" stroke="#3a3a3a" stroke-width="1"/></svg>
<div class="t" style="right:25.299999999999955px;top:133px;font-size:11px;color:#333;font-weight:normal;font-size:11px;letter-spacing:-0.5px;">Anzahl Waschbecken</div>
<svg style="left:1709.0px;top:145px" width="47" height="11" viewBox="0 0 47 11"><path d="M2.8 0.5 H1 V10.5 H2.8 M43.6 0.5 H45.4 V10.5 H43.6" fill="none" stroke="#3a3a3a" stroke-width="1.1"/><circle cx="10.8" cy="3.1" r="2.7" fill="none" stroke="#3a3a3a" stroke-width="1"/><path d="M10.8 0.4 A2.7 2.7 0 0 1 13.2 2.2 L10.8 3.2 Z" fill="#3a3a3a"/><rect x="7.5" y="6.8" width="6.6" height="2.6" fill="none" stroke="#3a3a3a" stroke-width="1"/><path d="M24.5 6 L26.6 9.2 L31 1 M31.5 6 L33.6 9.2 L38.2 1" fill="none" stroke="#555" stroke-width="0.9"/></svg>
<div class="t" style="right:1485.5px;top:162.5px;font-size:11px;color:#333;font-weight:normal;font-size:11px;letter-spacing:-0.5px;">1</div>
<div class="t" style="right:1485.5px;top:179.17000000000002px;font-size:11px;color:#333;font-weight:normal;font-size:11px;letter-spacing:-0.5px;">2</div>
<div class="t" style="right:1485.5px;top:195.84px;font-size:11px;color:#333;font-weight:normal;font-size:11px;letter-spacing:-0.5px;">3</div>
<div class="t" style="right:1485.5px;top:212.51px;font-size:11px;color:#333;font-weight:normal;font-size:11px;letter-spacing:-0.5px;">4</div>
<div class="t" style="right:1485.5px;top:229.18px;font-size:11px;color:#333;font-weight:normal;font-size:11px;letter-spacing:-0.5px;">5</div>
<div class="t" style="right:1485.5px;top:245.85000000000002px;font-size:11px;color:#333;font-weight:normal;font-size:11px;letter-spacing:-0.5px;">6</div>
<div class="t" style="right:1485.5px;top:262.52px;font-size:11px;color:#333;font-weight:normal;font-size:11px;letter-spacing:-0.5px;">7</div>
<div class="t" style="right:1485.5px;top:279.19px;font-size:11px;color:#333;font-weight:normal;font-size:11px;letter-spacing:-0.5px;">8</div>
<div class="t" style="right:1485.5px;top:295.86px;font-size:11px;color:#333;font-weight:normal;font-size:11px;letter-spacing:-0.5px;">9</div>
<div class="t" style="right:1485.5px;top:312.53000000000003px;font-size:11px;color:#333;font-weight:normal;font-size:11px;letter-spacing:-0.5px;">10</div>
<div class="t" style="right:1485.5px;top:329.20000000000005px;font-size:11px;color:#333;font-weight:normal;font-size:11px;letter-spacing:-0.5px;">11</div>
<div class="t" style="right:1485.5px;top:345.87px;font-size:11px;color:#333;font-weight:normal;font-size:11px;letter-spacing:-0.5px;">12</div>
<div class="t" style="left:316px;top:163.0px;font-size:10.5px;color:#aaa;font-weight:normal;letter-spacing:-0.6px">&lt;Filter&gt;</div>
<div class="t" style="left:407px;top:162.5px;font-size:11.5px;color:#333;font-weight:bold;letter-spacing:-0.4px">&lt;LISTE&gt;</div>
<div class="t" style="right:922.8px;top:163.0px;font-size:10.5px;color:#aaa;font-weight:normal;letter-spacing:-0.6px">&lt;Filter&gt;</div>
<div class="t" style="right:697.8px;top:163.0px;font-size:10.5px;color:#aaa;font-weight:normal;letter-spacing:-0.6px">&lt;Filter&gt;</div>
<div class="t" style="right:247.79999999999995px;top:163.0px;font-size:10.5px;color:#aaa;font-weight:normal;letter-spacing:-0.6px">&lt;Filter&gt;</div>
<div class="t" style="right:22.799999999999955px;top:163.0px;font-size:10.5px;color:#aaa;font-weight:normal;letter-spacing:-0.6px">&lt;Filter&gt;</div>
<div class="t" style="right:473.79999999999995px;top:160.0px;font-size:10px;color:#333;font-weight:bold;letter-spacing:-0.5px">...</div>
<div class="t" style="left:316px;top:179.17000000000002px;font-size:11px;color:#333;font-weight:normal;font-size:11px;letter-spacing:-0.5px;"></div>
<div class="t" style="left:406.5px;top:179.17000000000002px;font-size:11px;color:#333;font-weight:normal;font-size:11px;letter-spacing:-0.5px;">Projekt (Office-Bsp-TGA)</div>
<div class="t" style="right:922.3px;top:179.17000000000002px;font-size:11px;color:#333;font-weight:normal;font-size:11px;letter-spacing:-0.5px;">0</div>
<div class="t" style="right:697.3px;top:179.17000000000002px;font-size:11px;color:#333;font-weight:normal;font-size:11px;letter-spacing:-0.5px;">0</div>
<div class="t" style="right:472.29999999999995px;top:179.17000000000002px;font-size:11px;color:#333;font-weight:normal;font-size:11px;letter-spacing:-0.5px;">&lt;"variiert"&gt;</div>
<div class="t" style="right:247.29999999999995px;top:179.17000000000002px;font-size:11px;color:#333;font-weight:normal;font-size:11px;letter-spacing:-0.5px;">&lt;"variiert"&gt;</div>
<div class="t" style="right:22.299999999999955px;top:179.17000000000002px;font-size:11px;color:#333;font-weight:normal;font-size:11px;letter-spacing:-0.5px;">0</div>
<div class="t" style="left:316px;top:195.84px;font-size:11px;color:#333;font-weight:normal;font-size:11px;letter-spacing:-0.5px;">01</div>
<div class="t" style="left:412.5px;top:195.84px;font-size:11px;color:#333;font-weight:normal;font-size:11px;letter-spacing:-0.5px;">Hauptgebäude</div>
<div class="t" style="right:922.3px;top:195.84px;font-size:11px;color:#333;font-weight:normal;font-size:11px;letter-spacing:-0.5px;">0</div>
<div class="t" style="right:697.3px;top:195.84px;font-size:11px;color:#333;font-weight:normal;font-size:11px;letter-spacing:-0.5px;">0</div>
<div class="t" style="right:472.29999999999995px;top:195.84px;font-size:11px;color:#333;font-weight:normal;font-size:11px;letter-spacing:-0.5px;">&lt;"variiert"&gt;</div>
<div class="t" style="right:247.29999999999995px;top:195.84px;font-size:11px;color:#333;font-weight:normal;font-size:11px;letter-spacing:-0.5px;">&lt;"variiert"&gt;</div>
<div class="t" style="right:22.299999999999955px;top:195.84px;font-size:11px;color:#333;font-weight:normal;font-size:11px;letter-spacing:-0.5px;">0</div>
<div class="t" style="left:316px;top:212.51px;font-size:11px;color:#333;font-weight:normal;font-size:11px;letter-spacing:-0.5px;">00</div>
<div class="t" style="left:417.5px;top:212.51px;font-size:11px;color:#333;font-weight:normal;font-size:11px;letter-spacing:-0.5px;">EG - OK RFB</div>
<div class="t" style="right:922.3px;top:212.51px;font-size:11px;color:#333;font-weight:normal;font-size:11px;letter-spacing:-0.5px;">0</div>
<div class="t" style="right:697.3px;top:212.51px;font-size:11px;color:#333;font-weight:normal;font-size:11px;letter-spacing:-0.5px;">0</div>
<div class="t" style="right:472.29999999999995px;top:212.51px;font-size:11px;color:#333;font-weight:normal;font-size:11px;letter-spacing:-0.5px;">0</div>
<div class="t" style="right:247.29999999999995px;top:212.51px;font-size:11px;color:#333;font-weight:normal;font-size:11px;letter-spacing:-0.5px;">&lt;"variiert"&gt;</div>
<div class="t" style="right:22.299999999999955px;top:212.51px;font-size:11px;color:#333;font-weight:normal;font-size:11px;letter-spacing:-0.5px;">0</div>
<div class="t" style="left:316px;top:229.18px;font-size:11px;color:#333;font-weight:normal;font-size:11px;letter-spacing:-0.5px;">00.05a</div>
<div class="t" style="left:429px;top:229.18px;font-size:11px;color:#333;font-weight:normal;font-size:11px;letter-spacing:-0.5px;">WC-D</div>
<div class="t" style="right:922.3px;top:229.18px;font-size:11px;color:#333;font-weight:normal;font-size:11px;letter-spacing:-0.5px;">0</div>
<div class="t" style="right:247.29999999999995px;top:229.18px;font-size:11px;color:#333;font-weight:normal;font-size:11px;letter-spacing:-0.5px;">0</div>
<div class="t" style="right:22.299999999999955px;top:229.18px;font-size:11px;color:#f00000;font-weight:normal;font-size:11px;letter-spacing:-0.5px;">0</div>
<div class="t" style="left:316px;top:245.85000000000002px;font-size:11px;color:#333;font-weight:normal;font-size:11px;letter-spacing:-0.5px;">00.06a</div>
<div class="t" style="left:429px;top:245.85000000000002px;font-size:11px;color:#333;font-weight:normal;font-size:11px;letter-spacing:-0.5px;">WC-H</div>
<div class="t" style="right:922.3px;top:245.85000000000002px;font-size:11px;color:#333;font-weight:normal;font-size:11px;letter-spacing:-0.5px;">0</div>
<div class="t" style="right:247.29999999999995px;top:245.85000000000002px;font-size:11px;color:#333;font-weight:normal;font-size:11px;letter-spacing:-0.5px;">2</div>
<div class="t" style="right:22.299999999999955px;top:245.85000000000002px;font-size:11px;color:#f00000;font-weight:normal;font-size:11px;letter-spacing:-0.5px;">0</div>
<div class="t" style="left:316px;top:262.52px;font-size:11px;color:#333;font-weight:normal;font-size:11px;letter-spacing:-0.5px;">01</div>
<div class="t" style="left:417.5px;top:262.52px;font-size:11px;color:#333;font-weight:normal;font-size:11px;letter-spacing:-0.5px;">1. OG - OK RFB</div>
<div class="t" style="right:922.3px;top:262.52px;font-size:11px;color:#333;font-weight:normal;font-size:11px;letter-spacing:-0.5px;">0</div>
<div class="t" style="right:247.29999999999995px;top:262.52px;font-size:11px;color:#333;font-weight:normal;font-size:11px;letter-spacing:-0.5px;">&lt;"variiert"&gt;</div>
<div class="t" style="right:22.299999999999955px;top:262.52px;font-size:11px;color:#333;font-weight:normal;font-size:11px;letter-spacing:-0.5px;">0</div>
<div class="t" style="left:316px;top:279.19px;font-size:11px;color:#333;font-weight:normal;font-size:11px;letter-spacing:-0.5px;">01.06a</div>
<div class="t" style="left:429px;top:279.19px;font-size:11px;color:#333;font-weight:normal;font-size:11px;letter-spacing:-0.5px;">WC-D</div>
<div class="t" style="right:922.3px;top:279.19px;font-size:11px;color:#333;font-weight:normal;font-size:11px;letter-spacing:-0.5px;">0</div>
<div class="t" style="right:247.29999999999995px;top:279.19px;font-size:11px;color:#333;font-weight:normal;font-size:11px;letter-spacing:-0.5px;">0</div>
<div class="t" style="right:22.299999999999955px;top:279.19px;font-size:11px;color:#f00000;font-weight:normal;font-size:11px;letter-spacing:-0.5px;">0</div>
<div class="t" style="left:316px;top:295.86px;font-size:11px;color:#333;font-weight:normal;font-size:11px;letter-spacing:-0.5px;">01.07a</div>
<div class="t" style="left:429px;top:295.86px;font-size:11px;color:#333;font-weight:normal;font-size:11px;letter-spacing:-0.5px;">WC-H</div>
<div class="t" style="right:922.3px;top:295.86px;font-size:11px;color:#333;font-weight:normal;font-size:11px;letter-spacing:-0.5px;">0</div>
<div class="t" style="right:247.29999999999995px;top:295.86px;font-size:11px;color:#333;font-weight:normal;font-size:11px;letter-spacing:-0.5px;">2</div>
<div class="t" style="right:22.299999999999955px;top:295.86px;font-size:11px;color:#f00000;font-weight:normal;font-size:11px;letter-spacing:-0.5px;">0</div>
<div class="t" style="left:316px;top:312.53000000000003px;font-size:11px;color:#333;font-weight:normal;font-size:11px;letter-spacing:-0.5px;">02</div>
<div class="t" style="left:417.5px;top:312.53000000000003px;font-size:11px;color:#333;font-weight:normal;font-size:11px;letter-spacing:-0.5px;">2. OG - OK RFB</div>
<div class="t" style="right:922.3px;top:312.53000000000003px;font-size:11px;color:#333;font-weight:normal;font-size:11px;letter-spacing:-0.5px;">0</div>
<div class="t" style="right:247.29999999999995px;top:312.53000000000003px;font-size:11px;color:#333;font-weight:normal;font-size:11px;letter-spacing:-0.5px;">&lt;"variiert"&gt;</div>
<div class="t" style="right:22.299999999999955px;top:312.53000000000003px;font-size:11px;color:#333;font-weight:normal;font-size:11px;letter-spacing:-0.5px;">0</div>
<div class="t" style="left:316px;top:329.20000000000005px;font-size:11px;color:#333;font-weight:normal;font-size:11px;letter-spacing:-0.5px;">02.06a</div>
<div class="t" style="left:429px;top:329.20000000000005px;font-size:11px;color:#333;font-weight:normal;font-size:11px;letter-spacing:-0.5px;">WC-D</div>
<div class="t" style="right:922.3px;top:329.20000000000005px;font-size:11px;color:#333;font-weight:normal;font-size:11px;letter-spacing:-0.5px;">0</div>
<div class="t" style="right:247.29999999999995px;top:329.20000000000005px;font-size:11px;color:#333;font-weight:normal;font-size:11px;letter-spacing:-0.5px;">0</div>
<div class="t" style="right:22.299999999999955px;top:329.20000000000005px;font-size:11px;color:#f00000;font-weight:normal;font-size:11px;letter-spacing:-0.5px;">0</div>
<div class="t" style="left:316px;top:345.87px;font-size:11px;color:#333;font-weight:normal;font-size:11px;letter-spacing:-0.5px;">02.07a</div>
<div class="t" style="left:429px;top:345.87px;font-size:11px;color:#333;font-weight:normal;font-size:11px;letter-spacing:-0.5px;">WC-H</div>
<div class="t" style="right:922.3px;top:345.87px;font-size:11px;color:#333;font-weight:normal;font-size:11px;letter-spacing:-0.5px;">0</div>
<div class="t" style="right:247.29999999999995px;top:345.87px;font-size:11px;color:#333;font-weight:normal;font-size:11px;letter-spacing:-0.5px;">2</div>
<div class="t" style="right:22.299999999999955px;top:345.87px;font-size:11px;color:#f00000;font-weight:normal;font-size:11px;letter-spacing:-0.5px;">0</div>
<div style="left:1758px;top:128px;width:16px;height:16px;background:#fff;border:1px solid #dcdcdc"></div>
<div style="left:1758px;top:143px;width:16px;height:16px;background:#fff;border-right:1px solid #dcdcdc"></div>
<svg style="left:1762px;top:133px" width="7" height="7" viewBox="0 0 7 7"><rect x="0" y="0" width="7" height="1.2" fill="#333"/><path d="M0.3 2.6 H6.7 L3.5 6.2 Z" fill="#333"/></svg>
<div style="left:1758px;top:158px;width:16px;height:695px;background:#f0f0f0;border-right:1px solid #dcdcdc;border-bottom:1px solid #dcdcdc"></div>
<div style="left:1759.2px;top:174px;width:12.5px;height:662px;background:#c9c9c9"></div>
<svg style="left:1761.5px;top:164px" width="8" height="7" viewBox="0 0 8 7"><path d="M1 5.5 L4 2 L7 5.5" fill="none" stroke="#505050" stroke-width="2.1"/></svg>
<svg style="left:1761.5px;top:841px" width="8" height="7" viewBox="0 0 8 7"><path d="M1 1.5 L4 5 L7 1.5" fill="none" stroke="#505050" stroke-width="2.1"/></svg>
<div style="left:265px;top:861.3px;width:227px;height:23.5px;background:#d9d9d9"></div>
<div style="left:267.5px;top:864px;width:77.5px;height:21px;background:#fff"></div>
<div style="left:410px;top:861.3px;width:1.3px;height:23.5px;background:#f2f2f2"></div>
<div style="left:492px;top:884.3px;width:1286px;height:1.3px;background:#e2e2e2"></div>
<div class="t" style="left:275.5px;top:869px;font-size:10.9px;color:#333;font-weight:normal;">Protokoll</div>
<svg style="left:326px;top:866px" width="15" height="16" viewBox="0 0 15 16"><path d="M1 1.5 H14 L9 8 V14.5 L6 13 V8 Z" fill="none" stroke="#555" stroke-width="1.1"/></svg>
<div class="t" style="left:352px;top:869px;font-size:10.9px;color:#333;font-weight:normal;">Ergebnisse</div>
<div class="t" style="left:417.5px;top:869px;font-size:10.9px;color:#333;font-weight:normal;">Bemerkungen</div>
<div style="left:264px;top:916.5px;width:1498px;height:17.5px;background:#d9d9d9"></div>
<div class="t" style="left:267px;top:888.5px;font-size:11.8px;color:#333;font-weight:normal;">HINWEIS (Heizlast, Lastberechnung) in Unbenannt: Die Raumheizlasten sind nur teilweise aktiviert!</div>
<div class="t" style="left:267px;top:904.25px;font-size:11.8px;color:#333;font-weight:normal;">FEHLER (Raumbuch, Parametrisierung) in Projekt (Office-Bsp-TGA): Im Eigenschaftensatz Strukturdaten sind noch Fehler vorhanden</div>
<div class="t" style="left:267px;top:920.0px;font-size:11.8px;color:#333;font-weight:normal;">FEHLER (Raumbuch, Parametrisierung) in Projekt (Office-Bsp-TGA): Im Eigenschaftensatz Sanitärdaten sind noch Fehler vorhanden</div>
<div class="t" style="left:267px;top:935.75px;font-size:11.8px;color:#333;font-weight:normal;">FEHLER (Raumbuch, Parametrisierung) in Projekt (Office-Bsp-TGA): Im Eigenschaftensatz Elektrodaten sind noch Fehler vorhanden</div>
<div class="t" style="left:267px;top:951.5px;font-size:11.8px;color:#333;font-weight:normal;">FEHLER (Raumbuch, Parametrisierung) in Projekt (Office-Bsp-TGA): Im Eigenschaftensatz BU-Kühllast sind noch Fehler vorhanden</div>
<div class="t" style="left:267px;top:967.25px;font-size:11.8px;color:#333;font-weight:normal;">Prüfung beendet, 4 Fehler und 9 Warnungen.</div>
<div style="left:1762.5px;top:885.5px;width:14.5px;height:114.5px;background:#f0f0f0"></div>
<div style="left:1763px;top:952.5px;width:13.5px;height:15.5px;background:#c9c9c9"></div>
<svg style="left:1766px;top:891px" width="9" height="6" viewBox="0 0 9 6"><path d="M0.8 5 L4.5 1.2 L8.2 5" fill="none" stroke="#444" stroke-width="1.6"/></svg>
<svg style="left:1766px;top:974px" width="9" height="6" viewBox="0 0 9 6"><path d="M0.8 1 L4.5 4.8 L8.2 1" fill="none" stroke="#444" stroke-width="1.6"/></svg>
<div style="left:1011px;top:219px;width:326px;height:557.5px;background:#fff;border:1px solid #666;box-shadow:0 1px 14px rgba(0,0,0,0.16)"></div>
<svg style="left:1019px;top:227px" width="15" height="12" viewBox="0 0 15 12"><rect x="0.5" y="0.5" width="14" height="11" fill="#e8e8e8" stroke="#aaa"/><rect x="2" y="2.5" width="5" height="8" fill="#3a8a6a"/><rect x="10" y="2.5" width="2" height="3" fill="#5ab0e0"/></svg>
<div class="t" style="left:1039px;top:228px;font-size:10.9px;color:#222;font-weight:normal;">Einschränkungen</div>
<div class="t" style="left:1269.5px;top:227px;font-size:12px;color:#222;font-weight:normal;">?</div>
<svg style="left:1309px;top:228px" width="12" height="12" viewBox="0 0 12 12"><path d="M0.6 0.6 L11 11 M11 0.6 L0.6 11" stroke="#222" stroke-width="1.1"/></svg>
<svg style="left:1020.5px;top:257.5px" width="13" height="13" viewBox="0 0 13 13"><circle cx="6.3" cy="6.3" r="5.7" fill="#f4f4f4" stroke="#777" stroke-width="1.1"/></svg>
<div class="t" style="left:1036px;top:259.8px;font-size:10px;color:#333;font-weight:normal;">Uneingeschränkt</div>
<div class="t" style="left:1034px;top:281.5px;font-size:9.9px;color:#333;font-weight:normal;">Alle gültigen Eingaben des zugrundeliegenden Datentyps sind</div>
<div class="t" style="left:1034px;top:293.5px;font-size:9.9px;color:#333;font-weight:normal;">zulässig.</div>
<svg style="left:1020.5px;top:315px" width="13" height="13" viewBox="0 0 13 13"><circle cx="6.3" cy="6.3" r="5.7" fill="#fff" stroke="#1c80e0" stroke-width="1.1"/><circle cx="6.3" cy="6.3" r="3.5" fill="#1c80e0"/></svg>
<div class="t" style="left:1036px;top:317.3px;font-size:10px;color:#333;font-weight:normal;">Wertebereich</div>
<div class="t" style="left:1034px;top:337px;font-size:10px;color:#333;font-weight:normal;">Untere Grenze</div>
<div style="left:1032px;top:352px;width:271px;height:20.5px;border:1px solid #e0e0e0;background:#fff"></div>
<div class="t" style="left:1036px;top:356px;font-size:9.9px;color:#333;font-weight:normal;">IF([LIN_BA_ROOM_TYPE]=5;1;0)</div>
<div style="left:1306px;top:352px;width:24px;height:20.5px;border:1px solid #e0e0e0;background:#fff"></div>
<div class="t" style="left:1308.5px;top:357.5px;font-size:10.5px;color:#333;font-weight:normal;letter-spacing:-0.3px">f(x)</div>
<svg style="left:1033px;top:376px" width="12" height="12" viewBox="0 0 12 12"><rect x="0.6" y="0.9" width="11" height="11" fill="#fff" stroke="#666" stroke-width="1.1"/><path d="M2.6 6.4 L4.9 8.8 L9.2 4.2" fill="none" stroke="#555" stroke-width="1.9"/></svg>
<div class="t" style="left:1048px;top:377px;font-size:9.6px;color:#333;font-weight:normal;">eingeschlossen</div>
<div class="t" style="left:1034px;top:399px;font-size:10px;color:#333;font-weight:normal;">Obere Grenze</div>
<div style="left:1032px;top:414px;width:271px;height:20.5px;border:1px solid #e0e0e0;background:#fff"></div>
<div style="left:1306px;top:414px;width:24px;height:20.5px;border:1px solid #e0e0e0;background:#fff"></div>
<div class="t" style="left:1308.5px;top:419.5px;font-size:10.5px;color:#333;font-weight:normal;letter-spacing:-0.3px">f(x)</div>
<svg style="left:1033px;top:440px" width="12" height="12" viewBox="0 0 12 12"><rect x="0.6" y="0.9" width="11" height="11" fill="#fff" stroke="#666" stroke-width="1.1"/><path d="M2.6 6.4 L4.9 8.8 L9.2 4.2" fill="none" stroke="#555" stroke-width="1.9"/></svg>
<div class="t" style="left:1048px;top:441px;font-size:9.6px;color:#333;font-weight:normal;">eingeschlossen</div>
<svg style="left:1022.5px;top:462.5px" width="13" height="13" viewBox="0 0 13 13"><circle cx="6.3" cy="6.3" r="5.7" fill="#f2f2f2" stroke="#ddd" stroke-width="1.1"/></svg>
<div class="t" style="left:1038px;top:465.3px;font-size:10px;color:#333;font-weight:normal;">Muster</div>
<div style="left:1036px;top:483px;width:269px;height:21px;border:1px solid #e3e3e3;background:#ececec"></div>
<div style="left:1307px;top:483px;width:23px;height:21px;border:1px solid #e3e3e3;background:#fff"></div>
<div class="t" style="left:1312px;top:489px;font-size:9px;color:#888;font-weight:normal;letter-spacing:0.5px">...</div>
<svg style="left:1022.5px;top:515px" width="13" height="13" viewBox="0 0 13 13"><circle cx="6.3" cy="6.3" r="5.7" fill="#f4f4f4" stroke="#777" stroke-width="1.1"/></svg>
<div class="t" style="left:1038px;top:517.3px;font-size:10px;color:#333;font-weight:normal;">Werteliste</div>
<div class="t" style="left:1035px;top:538.5px;font-size:9.9px;color:#333;font-weight:normal;">Die zulässigen Eingaben werden auf die angegebenen</div>
<div class="t" style="left:1035px;top:550.5px;font-size:9.9px;color:#333;font-weight:normal;">Vorschlagswerte beschränkt.</div>
<div style="left:1036px;top:576px;width:294px;height:163px;border:1px solid #e0e0e0;background:#fff"></div>
<div style="left:1036px;top:594px;width:277px;height:1px;background:#dcdcdc"></div>
<div style="left:1059px;top:576px;width:1px;height:163px;background:#dcdcdc"></div>
<div style="left:1132px;top:576px;width:1px;height:163px;background:#dcdcdc"></div>
<div style="left:1313px;top:576px;width:1px;height:163px;background:#dcdcdc"></div>
<div style="left:1059px;top:594px;width:254px;height:0px;"></div>
<div style="left:1059px;top:611px;width:254px;height:1px;background:#dcdcdc"></div>
<div style="left:1059px;top:627px;width:254px;height:1px;background:#dcdcdc"></div>
<div style="left:1059px;top:644px;width:254px;height:1px;background:#dcdcdc"></div>
<div style="left:1059px;top:661px;width:254px;height:1px;background:#dcdcdc"></div>
<div style="left:1059px;top:677px;width:254px;height:1px;background:#dcdcdc"></div>
<div style="left:1059px;top:694px;width:254px;height:1px;background:#dcdcdc"></div>
<div style="left:1059px;top:711px;width:254px;height:1px;background:#dcdcdc"></div>
<div style="left:1059px;top:727px;width:254px;height:1px;background:#dcdcdc"></div>
<div class="t" style="left:1061px;top:581px;font-size:10px;color:#555;font-weight:normal;letter-spacing:-0.4px">Werte</div>
<div class="t" style="left:1134px;top:581px;font-size:10px;color:#555;font-weight:normal;letter-spacing:-0.45px">Darstellungstext (optional)</div>
<div style="left:1314px;top:595px;width:15.5px;height:143.5px;background:#f0f0f0"></div>
<div style="left:1315.5px;top:610.5px;width:13px;height:111px;background:#c9c9c9"></div>
<svg style="left:1318px;top:599.5px" width="8" height="7" viewBox="0 0 8 7"><path d="M1 5.5 L4 2 L7 5.5" fill="none" stroke="#505050" stroke-width="1.9"/></svg>
<svg style="left:1318px;top:727.5px" width="8" height="7" viewBox="0 0 8 7"><path d="M1 1.5 L4 5 L7 1.5" fill="none" stroke="#505050" stroke-width="1.9"/></svg>
<div style="left:1183px;top:744px;width:69.5px;height:22px;border:1px solid #e0e0e0;background:#fff"></div>
<div class="t" style="left:1210.5px;top:750.5px;font-size:10.3px;color:#333;font-weight:normal;">OK</div>
<div style="left:1259px;top:744px;width:70px;height:22px;border:1px solid #e0e0e0;background:#fff"></div>
<div class="t" style="left:1268.5px;top:750.5px;font-size:10.3px;color:#333;font-weight:normal;letter-spacing:-0.3px">Abbrechen</div>
<svg style="left:1326px;top:766px" width="10" height="10" viewBox="0 0 10 10"><path d="M9.6 0.8 L0.8 9.6 M9.6 4 L4 9.6 M9.6 7.2 L7.2 9.6" stroke="#8a8a8a" stroke-width="1.2"/></svg>
</body></html>
